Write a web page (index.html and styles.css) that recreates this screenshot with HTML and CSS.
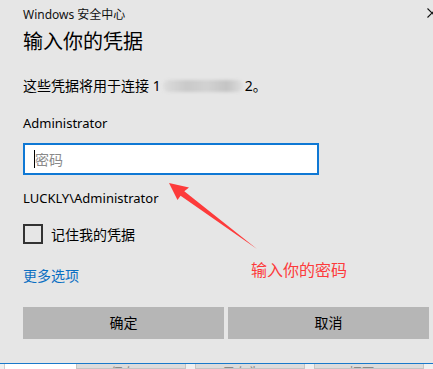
FILE: index.html
```html
<!DOCTYPE html>
<html lang="zh-CN">
<head>
    <meta charset="UTF-8">
    <meta name="viewport" content="width=device-width, initial-scale=1.0">
    <title>Windows 安全中心</title>
    <link rel="stylesheet" href="styles.css">
</head>
<body>
    <div class="dialog">
        <div class="dialog-title">
            <span>Windows 安全中心</span>
            <svg class="close-icon" width="10" height="10" viewBox="0 0 10 10">
                <path d="M0.5 0.5 L9.5 9.5 M9.5 0.5 L0.5 9.5" stroke="#111" stroke-width="1.1" fill="none"/>
            </svg>
        </div>
        <div class="dialog-heading">输入你的凭据</div>
        <div class="dialog-desc">这些凭据将用于连接 1<span class="blur-box"></span>2。</div>
        <div class="user-name">Administrator</div>
        <div class="pwd-box">
            <span class="caret"></span>
            <span class="placeholder">密码</span>
        </div>
        <div class="domain-user">LUCKLY\Administrator</div>
        <label class="remember">
            <span class="check-box"></span>
            <span>记住我的凭据</span>
        </label>
        <a class="more-link" href="javascript:;">更多选项</a>
        <div class="btn-row">
            <div class="btn">确定</div>
            <div class="btn">取消</div>
        </div>
    </div>
    <!-- 后面窗口露出的按钮 -->
    <div class="behind">
        <div class="behind-edge"></div>
        <div class="behind-white"></div>
        <div class="behind-btn">保存(S)</div>
        <div class="behind-btn">另存为(A)</div>
        <div class="behind-btn">打开(E)</div>
    </div>
    <!-- 标注 -->
    <svg class="mark-arrow" width="433" height="369" viewBox="0 0 433 369">
        <polygon points="169,183 189,187.5 184.3,191.2 257,249 180.6,195.8 177.5,200" fill="#fd3b3b"/>
    </svg>
    <div class="mark-text">输入你的密码</div>
</body>
</html>
```

FILE: styles.css
```css
html, body{
    margin: 0px;
    padding: 0px;
}
body{
    width: 433px;
    height: 369px;
    overflow: hidden;
    position: relative;
    background-color: #e6e6e6;
    font-family: "Noto Sans", "Noto Sans CJK SC", sans-serif;
    color: #000000;
}
.dialog{
    box-sizing: border-box;
    height: 364px;
    padding: 0px 4px 0px 23px;
    border-bottom: 1px solid #1979ca;
    overflow: hidden;
}
.dialog-title{
    display: flex;
    justify-content: space-between;
    align-items: center;
    height: 28px;
    font-size: 12px;
    color: #111;
}
.close-icon{
    margin-right: -8px;
    margin-top: -2px;
}
.dialog-heading{
    height: 28px;
    line-height: 28px;
    font-size: 20px;
}
.dialog-desc{
    margin-top: 20px;
    line-height: 20px;
    font-size: 14px;
}
.blur-box{
    display: inline-block;
    width: 80px;
    height: 12px;
    margin: 0px 2px;
    vertical-align: -1px;
    border-radius: 6px;
    background: linear-gradient(90deg, #dcdcdc 0%, #c9c9c9 30%, #d2d2d2 55%, #c4c4c4 80%, #dedede 100%);
    filter: blur(1.5px);
}
.user-name{
    margin-top: 17px;
    line-height: 20px;
    font-size: 13px;
}
.pwd-box{
    box-sizing: border-box;
    display: flex;
    align-items: center;
    width: 296px;
    height: 32px;
    margin-top: 10px;
    padding-left: 9px;
    background-color: #ffffff;
    border: 2px solid #0f78d4;
}
.caret{
    width: 1px;
    height: 18px;
    background-color: #000;
}
.placeholder{
    font-size: 14px;
    color: #8a8a8a;
}
.domain-user{
    margin-top: 13px;
    line-height: 20px;
    font-size: 13px;
}
.remember{
    display: flex;
    align-items: center;
    height: 20px;
    margin-top: 16px;
    font-size: 14px;
}
.check-box{
    box-sizing: border-box;
    width: 20px;
    height: 20px;
    margin-right: 8px;
    border: 2px solid #333333;
}
.more-link{
    display: block;
    margin-top: 22px;
    line-height: 20px;
    font-size: 14px;
    color: #0a6fc2;
    text-decoration: none;
}
.btn-row{
    display: flex;
    gap: 4px;
    margin-top: 21px;
}
.btn{
    width: 201px;
    height: 32px;
    line-height: 32px;
    text-align: center;
    font-size: 14px;
    background-color: #b6b6b6;
}
.behind{
    display: flex;
    height: 5px;
    background-color: #f0f0f0;
}
.behind-edge{
    width: 5px;
    border-right: 1px solid #cfcfcf;
    box-sizing: border-box;
}
.behind-white{
    width: 72px;
    background-color: #ffffff;
}
.behind-btn{
    box-sizing: border-box;
    width: 112px;
    margin-right: 9px;
    padding-top: 1px;
    line-height: 14px;
    text-align: center;
    font-size: 13px;
    color: #8a8a8a;
    background-color: #dcdcdc;
    border: 1px solid #c4c4c4;
    border-top: none;
    overflow: hidden;
}
.mark-arrow{
    position: absolute;
    left: 0px;
    top: 0px;
    pointer-events: none;
}
.mark-text{
    position: absolute;
    left: 251px;
    top: 259px;
    font-size: 16px;
    line-height: 22px;
    color: #fd3b3b;
}
```
